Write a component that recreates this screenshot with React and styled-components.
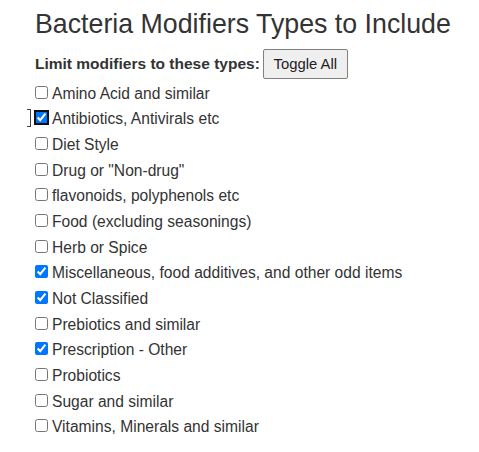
import React from "react";
import styled, { createGlobalStyle } from "styled-components";

const Global = createGlobalStyle`
  html, body { margin: 0; padding: 0; background: #fff; }
  body { font-family: "Liberation Sans", Arial, sans-serif; color: #333; }
`;

const Page = styled.div`
  padding: 9px 0 0 35px;
`;

const Title = styled.h1`
  margin: 0;
  font-size: 26.75px;
  font-weight: 400;
  line-height: normal;
  color: #333;
`;

const LimitRow = styled.div`
  display: flex;
  align-items: baseline;
  margin-top: 9px;
`;

const LimitLabel = styled.span`
  font-weight: 700;
  font-size: 15.5px;
  color: #333;
`;

const ToggleButton = styled.button`
  font-family: "Liberation Sans", Arial, sans-serif;
  font-size: 14.85px;
  color: #222;
  background: #efefef;
  border: 1px solid #808080;
  border-radius: 2px;
  height: 30px;
  width: 85px;
  padding: 0;
  margin-left: 3px;
`;

const List = styled.div`
  display: flex;
  flex-direction: column;
  margin-top: 2px;
`;

const Item = styled.label`
  position: relative;
  display: flex;
  align-items: center;
  height: 25.65px;
  font-size: 15.6px;
  color: #333;
`;

const Box = styled.input`
  margin: 0 4px 3px 0;
  width: 13px;
  height: 13px;
  accent-color: #0075ff;
  ${(p) => p.$focused && `outline: 2px solid #101010; outline-offset: -1px; border-radius: 2px;`}
`;

const FocusMark = styled.span`
  position: absolute;
  left: -8px;
  top: 2px;
  width: 3px;
  height: 16px;
  border: 1px solid #444;
  border-left: none;
`;

const items = [
  ["Amino Acid and similar", false],
  ["Antibiotics, Antivirals etc", true, true],
  ["Diet Style", false],
  ['Drug or "Non-drug"', false],
  ["flavonoids, polyphenols etc", false],
  ["Food (excluding seasonings)", false],
  ["Herb or Spice", false],
  ["Miscellaneous, food additives, and other odd items", true],
  ["Not Classified", true],
  ["Prebiotics and similar", false],
  ["Prescription - Other", true],
  ["Probiotics", false],
  ["Sugar and similar", false],
  ["Vitamins, Minerals and similar", false],
];

export default function App() {
  return (
    <Page>
      <Global />
      <Title>Bacteria Modifiers Types to Include</Title>
      <LimitRow>
        <LimitLabel>Limit modifiers to these types:</LimitLabel>
        <ToggleButton>Toggle All</ToggleButton>
      </LimitRow>
      <List>
        {items.map(([t, c, f]) => (
          <Item key={t}>
            {f && <FocusMark />}
            <Box type="checkbox" defaultChecked={c} $focused={f} />
            {t}
          </Item>
        ))}
      </List>
    </Page>
  );
}
